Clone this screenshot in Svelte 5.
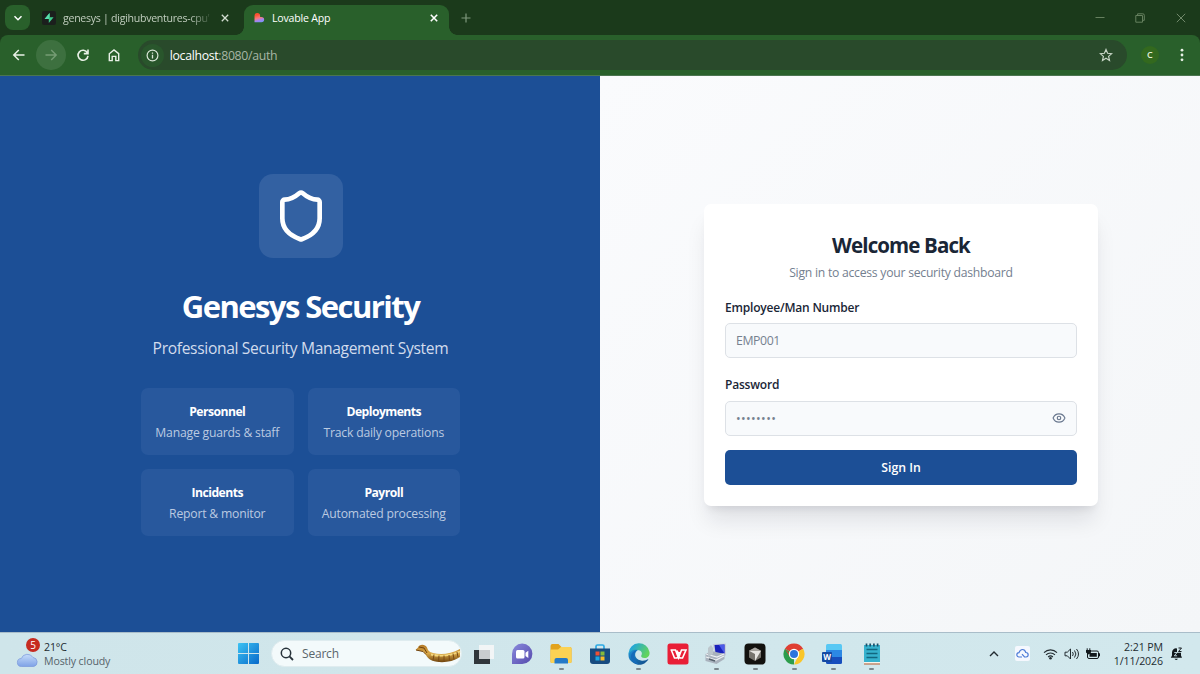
<script>
    const features = [
        { title: "Personnel", text: "Manage guards & staff" },
        { title: "Deployments", text: "Track daily operations" },
        { title: "Incidents", text: "Report & monitor" },
        { title: "Payroll", text: "Automated processing" }
    ];

    let employeeNumber = $state("");
    let password = $state("");
    let showPassword = $state(false);
</script>

<div class="screen">
    <header class="tabs">
        <button class="tab-menu" aria-label="Search tabs">
            <svg width="10" height="10" viewBox="0 0 10 10"><path d="M1.5 3.2 5 6.7l3.5-3.5" fill="none" stroke="#fff" stroke-width="1.5"/></svg>
        </button>
        <div class="tab">
            <svg class="favicon" width="14" height="14" viewBox="0 0 14 14">
                <rect width="14" height="14" rx="2" fill="#1b1f1d"/>
                <path d="M7.6 2v4.2h4L6.8 12V8H2.6z" fill="#3ecf8e"/>
                <path d="M7.6 2v4.2H7L6.8 8H2.6z" fill="#58dcae"/>
            </svg>
            <span class="tab-title faded">genesys | digihubventures-cpu'</span>
            <svg class="close" width="8" height="8" viewBox="0 0 8 8"><path d="m.8.8 6.4 6.4m0-6.4L.8 7.2" stroke="#d3ddd1" stroke-width="1.3"/></svg>
        </div>
        <div class="tab active">
            <svg class="favicon" width="12" height="12" viewBox="0 0 12 12">
                <defs>
                    <linearGradient id="heart" x1=".2" y1="0" x2=".5" y2="1">
                        <stop offset=".2" stop-color="#fa5030"/>
                        <stop offset=".55" stop-color="#f57a78"/>
                        <stop offset=".8" stop-color="#a784f0"/>
                        <stop offset="1" stop-color="#7f92f5"/>
                    </linearGradient>
                </defs>
                <path d="M1.5 3.8a2.8 2.8 0 0 1 5.6 0v1.1h1.4a2.6 2.6 0 0 1 0 5.3h-7z" fill="url(#heart)"/>
            </svg>
            <span class="tab-title">Lovable App</span>
            <svg class="close" width="8" height="8" viewBox="0 0 8 8"><path d="m.8.8 6.4 6.4m0-6.4L.8 7.2" stroke="#fff" stroke-width="1.6"/></svg>
        </div>
        <svg class="new-tab" width="10" height="10" viewBox="0 0 10 10"><path d="M5 .5v9M.5 5h9" stroke="#7f987d" stroke-width="1.2"/></svg>
        <div class="window-buttons">
            <svg width="10" height="10" viewBox="0 0 10 10"><path d="M.5 4.500h9" stroke="#66805f"/></svg>
            <svg width="10" height="10" viewBox="0 0 10 10"><path d="M.8 2.5h6.7v6.7H.8zM2.6 2.4V.8h5.2q1.5 0 1.5 1.5v5H7.7" fill="none" stroke="#66805f"/></svg>
            <svg width="10" height="10" viewBox="0 0 10 10"><path d="m.8.8 8.4 8.4m0-8.4L.8 9.2" stroke="#71896b"/></svg>
        </div>
    </header>

    <nav class="toolbar">
        <div class="nav-buttons">
            <span class="nav-button"><svg width="14" height="14" viewBox="0 0 14 14"><path d="M12.5 7H2m4.8-5L1.8 7l5 5" fill="none" stroke="#e9f1e7" stroke-width="1.5"/></svg></span>
            <span class="nav-button disabled"><svg width="14" height="14" viewBox="0 0 14 14"><path d="M1.5 7H12M7.2 2l5 5-5 5" fill="none" stroke="#759c74" stroke-width="1.4"/></svg></span>
            <span class="nav-button"><svg width="14" height="14" viewBox="0 0 14 14"><path d="M11.4 4.8A5 5 0 1 0 12 7.8M12 1.4v4.2H7.8" fill="none" stroke="#e9f1e7" stroke-width="1.6"/></svg></span>
            <span class="nav-button"><svg width="14" height="14" viewBox="0 0 14 14"><path d="M2.3 5.7 7 1.9l4.7 3.8v6.9H8.8V8.4H5.2v4.2H2.3z" fill="none" stroke="#e9f1e7" stroke-width="1.4"/></svg></span>
        </div>
        <div class="address">
            <span class="site-info">
                <svg width="13" height="13" viewBox="0 0 13 13"><circle cx="6.5" cy="6.5" r="5.4" fill="none" stroke="#dbe7d9" stroke-width="1.2"/><path d="M6.5 5.8v3.6M6.5 3.4v1.4" stroke="#dbe7d9" stroke-width="1.3"/></svg>
            </span>
            <span class="url"><b>localhost</b>:8080/auth</span>
            <svg class="star" width="14" height="14" viewBox="0 0 14 14"><path d="m7 1.5 1.6 3.8 4.1.4-3.1 2.7.9 4L7 10.3l-3.5 2.1.9-4-3.1-2.7 4.1-.4z" fill="none" stroke="#c5d3c4" stroke-width="1.2"/></svg>
        </div>
        <span class="avatar">C</span>
        <svg class="kebab" width="4" height="14" viewBox="0 0 4 14" fill="#e9f1e7"><circle cx="2" cy="2.2" r="1.4"/><circle cx="2" cy="7" r="1.4"/><circle cx="2" cy="11.8" r="1.4"/></svg>
    </nav>

    <main>
        <section class="brand">
            <div class="logo">
                <svg width="56" height="56" viewBox="0 0 24 24" fill="none" stroke="#fff" stroke-width="2" stroke-linecap="round" stroke-linejoin="round">
                    <path d="M20 13c0 5-3.5 7.5-7.66 8.95a1 1 0 0 1-.67-.01C7.5 20.5 4 18 4 13V6a1 1 0 0 1 1-1c2 0 4.5-1.2 6.24-2.72a1.17 1.17 0 0 1 1.52 0C14.51 3.81 17 5 19 5a1 1 0 0 1 1 1z"/>
                </svg>
            </div>
            <h1>Genesys Security</h1>
            <p class="tagline">Professional Security Management System</p>
            <div class="features">
                {#each features as feature}
                    <div class="feature">
                        <h3>{feature.title}</h3>
                        <p>{feature.text}</p>
                    </div>
                {/each}
            </div>
        </section>

        <section class="login">
            <form class="card">
                <h2>Welcome Back</h2>
                <p class="subtitle">Sign in to access your security dashboard</p>
                <label for="employee">Employee/Man Number</label>
                <div class="field">
                    <input id="employee" type="text" placeholder="EMP001" bind:value={employeeNumber} />
                </div>
                <label for="password">Password</label>
                <div class="field password">
                    <input id="password" type={showPassword ? "text" : "password"} placeholder="••••••••" bind:value={password} />
                    <button type="button" class="eye" aria-label="Show password" onclick={() => (showPassword = !showPassword)}>
                        <svg width="14" height="14" viewBox="0 0 24 24" fill="none" stroke="#6a788f" stroke-width="2" stroke-linecap="round" stroke-linejoin="round">
                            <path d="M2.06 12.35a1 1 0 0 1 0-.7 10.75 10.75 0 0 1 19.88 0 1 1 0 0 1 0 .7 10.75 10.75 0 0 1-19.88 0"/>
                            <circle cx="12" cy="12" r="3"/>
                        </svg>
                    </button>
                </div>
                <button type="button" class="submit">Sign In</button>
            </form>
        </section>
    </main>

    <footer class="taskbar">
        <div class="weather">
            <div class="cloud">
                <svg width="24" height="18" viewBox="0 0 24 18">
                    <defs>
                        <linearGradient id="cloud" x1="0" y1="0" x2="0" y2="1"><stop offset="0" stop-color="#c6dcfa"/><stop offset="1" stop-color="#7ea2e6"/></linearGradient>
                    </defs>
                    <path d="M5.5 15.5a4 4 0 0 1-.2-8A6.500 6.500 0 0 1 17 6.500a4.600 4.600 0 0 1 .8 9z" fill="url(#cloud)" stroke="#7897db" stroke-width=".7"/>
                </svg>
                <span class="count">5</span>
            </div>
            <div class="weather-text">
                <div>21°C</div>
                <div class="condition">Mostly cloudy</div>
            </div>
        </div>

        <svg class="start" width="21" height="21" viewBox="0 0 21 21">
            <defs>
                <linearGradient id="win" x1="0" y1="0" x2="1" y2="1"><stop offset="0" stop-color="#3cc3f3"/><stop offset="1" stop-color="#0869ca"/></linearGradient>
            </defs>
            <path d="M1 0h9v10H0V1a1 1 0 0 1 1-1zM11 0h9a1 1 0 0 1 1 1v9H11zM0 11h10v10H1a1 1 0 0 1-1-1zM11 11h10v9a1 1 0 0 1-1 1h-9z" fill="url(#win)"/>
        </svg>

        <div class="search">
            <svg width="14" height="14" viewBox="0 0 14 14"><circle cx="6" cy="6" r="4.7" fill="none" stroke="#27323a" stroke-width="1.5"/><path d="m9.4 9.4 3.6 3.6" stroke="#27323a" stroke-width="1.8"/></svg>
            <span>Search</span>
            <svg class="highlight" width="46" height="21" viewBox="0 0 46 21">
                <defs>
                    <linearGradient id="gold" x1="0" y1="0" x2="0" y2="1"><stop offset="0" stop-color="#b47a28"/><stop offset=".5" stop-color="#d9a847"/><stop offset="1" stop-color="#70450f"/></linearGradient>
                </defs>
                <path d="M.5 7 3 4.500C4 1 10 .5 12 4.500c1 3 2 4.500 6 5.500 8 2 18 1 27-4v8c-8 5.500-20 6.500-28 3.500-6-2.500-6-7-9-9z" fill="url(#gold)"/>
                <path d="M16 11.500c9 2 19 1.500 29-3" fill="none" stroke="#f4d77d" stroke-width="1.8"/>
                <path d="m19 11.500-1 6m6-5-.5 6m5.500-6v6m5-6.500.5 6M38 10.500l1 6m3-7.500 1 5" stroke="#7a4b16"/>
                <path d="m1 7 7 1.500 3 3M4 4l5 1 3 5" fill="none" stroke="#70430f"/>
            </svg>
        </div>

        <div class="apps">
            <div class="app">
                <svg width="24" height="24" viewBox="0 0 24 24">
                    <rect x="3" y="8" width="16" height="14" fill="#30363b"/>
                    <rect x="8" y="3" width="15" height="14" fill="#f2f5f6"/>
                    <path d="M8 8h11v9H8z" fill="#c9cccf"/>
                </svg>
            </div>
            <div class="app">
                <svg width="24" height="24" viewBox="0 0 24 24">
                    <defs><linearGradient id="chat" x1="0" y1="0" x2="1" y2="1"><stop offset="0" stop-color="#8a8add"/><stop offset="1" stop-color="#5549ac"/></linearGradient></defs>
                    <path d="M2 22V12a10.2 10.2 0 1 1 10.2 10z" fill="url(#chat)"/>
                    <rect x="6" y="8" width="8.5" height="8.5" rx="1.5" fill="#fff"/>
                    <path d="m15.5 10.8 2.8-2V16l-2.8-2z" fill="#fff"/>
                </svg>
            </div>
            <div class="app running">
                <svg width="24" height="24" viewBox="0 0 24 24">
                    <path d="M1.5 4q0-2 2-2h6l3 3H21q1.5 0 1.5 1.5V20q0 1-1.5 1H3q-1.5 0-1.5-1.5z" fill="#e2a31e"/>
                    <path d="M1.5 7.5H9L12 5h9q1.5 0 1.5 1.5V20q0 1-1.5 1H3q-1.5 0-1.5-1.500z" fill="#fbd254"/>
                    <path d="M5.500 21.500V18q0-2 2-2h9.500q2 0 2 2v3.500z" fill="#2479c7"/>
                </svg>
            </div>
            <div class="app">
                <svg width="24" height="24" viewBox="0 0 24 24">
                    <path d="M8 7V4.500Q8 3 9.500 3h5Q16 3 16 4.500V7" fill="none" stroke="#2daae4" stroke-width="1.7"/>
                    <path d="M2 6.500h20V19q0 3-3 3H5q-3 0-3-3z" fill="#174b80"/>
                    <path d="M7.500 9.500h4v4h-4z" fill="#ed5135"/><path d="M12.500 9.500h4v4h-4z" fill="#85b93b"/><path d="M7.500 14.500h4v4h-4z" fill="#1ca8e3"/><path d="M12.500 14.500h4v4h-4z" fill="#f7bb27"/>
                </svg>
            </div>
            <div class="app running">
                <svg width="24" height="24" viewBox="0 0 24 24">
                    <defs>
                        <linearGradient id="edge" x1="0" y1="0" x2="1" y2=".5"><stop offset=".2" stop-color="#22a5dc"/><stop offset="1" stop-color="#62d45c"/></linearGradient>
                        <linearGradient id="wave" x1="0" y1="0" x2="1" y2="1"><stop offset="0" stop-color="#2193d8"/><stop offset="1" stop-color="#104986"/></linearGradient>
                    </defs>
                    <path d="M1.5 11a10.6 10.6 0 0 1 21-1c.5 4-2 6-5 6s-4-1.500-3-3c1.300-2-.5-5-4-5-4 0-8 2-9 5z" fill="url(#edge)"/>
                    <path d="M1.5 13C2 9 7 7 11 8c-4 2-4.500 9 3 10.500 3 .6 5.500-.5 7.500-1.500C18 23.500 11 24 6.500 21 3 19 1.300 16 1.500 13z" fill="url(#wave)"/>
                    <path d="M10 8.300C6 11 6 18 12 22.300 7.500 22 4 18.500 4 14.500 4 11 7 8.600 10 8.300z" fill="#176bb9"/>
                </svg>
            </div>
            <div class="app">
                <svg width="24" height="24" viewBox="0 0 24 24">
                    <rect x="1.5" y="1.5" width="21" height="21" rx="2.5" fill="#e91e36"/>
                    <path d="M4.500 8h5l3 8 3-8h4.500l-3.500 8h-2.500L11 8.500M5.500 8.500l3 7.500H11l2.500-6" fill="none" stroke="#fff" stroke-width="1.6"/>
                </svg>
            </div>
            <div class="app running">
                <svg width="24" height="24" viewBox="0 0 24 24">
                    <path d="m9 2 13-.5v12L10 13z" fill="#c9cedb"/>
                    <path d="m10.500 3 10-.5v9l-9-.5z" fill="#1922bb"/>
                    <path d="m15 3 5.500-.5v9z" fill="#4c5ae8"/>
                    <path d="m1.500 12 6-3 13 3v5l-8 5-11-3z" fill="#a9b2bd"/>
                    <path d="m2 12 11 3 7-3M2 15l10 3 8-4" fill="none" stroke="#eef1f3" stroke-width="1.2"/>
                    <path d="m4 6 3-3 2 3v6l-5 3z" fill="#bcc6cc"/>
                    <path d="m5 17 6 2" stroke="#56616c" stroke-width="1.5"/>
                </svg>
            </div>
            <div class="app running">
                <svg width="24" height="24" viewBox="0 0 24 24">
                    <rect x="1.5" y="1.5" width="21" height="21" rx="4" fill="#13120f"/>
                    <path d="m12 5.500 6 3.300v6.700L12 19l-6-3.500V8.800z" fill="#77746e"/>
                    <path d="M6 8.800h12L12 19v-7z" fill="#e7e5e2"/>
                    <path d="m6 8.800 6-3.300 6 3.300z" fill="#aaa7a2"/>
                </svg>
            </div>
            <div class="app running">
                <svg width="24" height="24" viewBox="0 0 24 24">
                    <path d="M12 12 2.900 6.750a10.500 10.500 0 0 1 18.200 0z" fill="#df3e33"/>
                    <path d="M12 12v10.500A10.500 10.500 0 0 1 2.900 6.750z" fill="#2c9d4b"/>
                    <path d="m12 12 9.100-5.250A10.500 10.500 0 0 1 12 22.500l4-8z" fill="#fac629"/>
                    <path d="M12 7h9.200L12 6.500zM7.700 14.500 2.900 6.750 10 14z" fill="#df3e33"/>
                    <circle cx="12" cy="12" r="5.2" fill="#fff"/><circle cx="12" cy="12" r="4" fill="#2c73dc"/>
                </svg>
            </div>
            <div class="app running">
                <svg width="24" height="24" viewBox="0 0 24 24">
                    <path d="M5 8V3.500Q5 2 6.500 2h13Q21 2 21 3.500V8z" fill="#58c8f4"/>
                    <path d="M5 8h16v7H5z" fill="#2c88e4"/>
                    <path d="M5 15h16v5.500q0 1.500-1.500 1.500h-13Q5 22 5 20.500z" fill="#174ebd"/>
                    <rect x="1" y="10" width="10" height="10" rx="1" fill="#1549a2"/>
                    <text x="6" y="18" class="word">W</text>
                </svg>
            </div>
            <div class="app running">
                <svg width="24" height="24" viewBox="0 0 24 24">
                    <path d="M4 3h16v18H4z" fill="#36b2ce"/>
                    <path d="M4 20h16v2.500H4z" fill="#f5f6ee"/><path d="M4 22h16" stroke="#a5522d"/>
                    <path d="M6.500 7.500h11m-11 4h11m-11 4h11" stroke="#126780" stroke-width="1.5"/>
                    <path d="M6.500 1.500v3m3.700-3v3m3.700-3v3m3.700-3v3" stroke="#18506a" stroke-width="1.7"/>
                </svg>
            </div>
        </div>

        <div class="tray">
            <svg class="chevron" width="10" height="8" viewBox="0 0 10 8"><path d="m1 6 4-4 4 4" fill="none" stroke="#222b30" stroke-width="1.4"/></svg>
            <svg class="onedrive" width="15" height="15" viewBox="0 0 15 15">
                <rect width="15" height="15" rx="2" fill="#f5f8fe"/>
                <path d="M7 11H4a2.200 2.200 0 0 1 0-4.400Q5 3.500 7.500 3.500t3.300 3A2.200 2.200 0 0 1 11 11H9.500L7 8.200" fill="none" stroke="#4c7bd7" stroke-width="1.2"/>
            </svg>
            <svg width="15" height="12" viewBox="0 0 15 12"><path d="M1 4.600a9.200 9.200 0 0 1 13 0M3 6.900a6.400 6.400 0 0 1 9 0M5.100 9a3.500 3.500 0 0 1 4.800 0" fill="none" stroke="#222b30" stroke-width="1.1"/><circle cx="7.5" cy="10.3" r="1.3" fill="#222b30"/></svg>
            <svg class="speaker" width="15" height="12" viewBox="0 0 15 12"><path d="M1 4.200h2.300L6.500 1v10L3.300 7.800H1zM8.500 4q1.500 2 0 4M10.500 2.500q2.800 3.500 0 7M12.500 1q4 5 0 10" fill="none" stroke="#222b30"/></svg>
            <svg class="battery" width="16" height="12" viewBox="0 0 16 12">
                <rect x="2.500" y="3" width="11" height="7.500" rx="1.5" fill="none" stroke="#12191d"/>
                <path d="M4.500 5h7.300v3.800H4.500zM1 2h5v2.500L3.500 6.500 1 4.500z" fill="#12191d"/>
                <path d="M2.200.3v3M4.800.3v3m9.700 2v3" stroke="#12191d"/>
            </svg>
            <div class="clock">
                <div>2:21 PM</div>
                <div>1/11/2026</div>
            </div>
            <svg class="bell" width="13" height="14" viewBox="0 0 13 14">
                <path d="M.8 10.800 2 8.500v-3a4 4 0 0 1 5-4v4.300h4v2.700l1 2.300z" fill="#12191d"/>
                <path d="M4.500 11.700q1.700 2.500 3.400 0z" fill="#12191d"/>
                <path d="M8.500 1h3l-3 3.500h3" fill="none" stroke="#12191d"/>
                <path d="M4.300 5.500h2.800L4.300 8.800h2.800" fill="none" stroke="#cfe7ec" stroke-width=".9"/>
            </svg>
        </div>
    </footer>
</div>

<style>
    :global(body) {
        margin: 0;
        overflow: hidden;
    }

    .screen {
        width: 1200px;
        height: 674px;
        display: flex;
        flex-direction: column;
        font-family: "Open Sans", "Noto Sans", sans-serif;
        font-size: 12px;
        background: #1b3a1b;
    }

    .screen * {
        box-sizing: border-box;
    }

    svg {
        display: block;
        flex: none;
    }

    h1, h2, h3, p {
        margin: 0;
    }

    button {
        border: 0;
        padding: 0;
        font-family: inherit;
    }

    .tabs {
        height: 35px;
        flex: none;
        display: flex;
        background: #1b3a1b;
    }

    .tab-menu {
        width: 25px;
        height: 25px;
        margin: 5px 8px 0 5px;
        border-radius: 8px;
        background: #29602b;
        display: flex;
        align-items: center;
        justify-content: center;
    }

    .tab {
        width: 206px;
        height: 30px;
        margin-top: 5px;
        padding: 0 15px 5px 4px;
        display: flex;
        align-items: center;
        color: #c0cdbe;
        font-size: 10.6px;
    }

    .tab .favicon {
        margin-right: 7px;
    }

    .tab-title {
        white-space: nowrap;
        letter-spacing: -0.2px;
    }

    .tab-title.faded {
        letter-spacing: -0.28px;
        mask-image: linear-gradient(to right, #000 86%, rgba(0, 0, 0, 0.15));
    }

    .tab .close {
        margin-left: auto;
    }

    .tab.active {
        width: 205px;
        position: relative;
        padding-left: 9px;
        padding-right: 11px;
        background: #29602b;
        border-radius: 9px 9px 0 0;
        color: #fff;
    }

    .tab.active::before,
    .tab.active::after {
        content: "";
        position: absolute;
        bottom: 0;
        width: 8px;
        height: 8px;
    }

    .tab.active::before {
        left: -8px;
        background: radial-gradient(circle at 0 0, transparent 7.5px, #29602b 8px);
    }

    .tab.active::after {
        right: -8px;
        background: radial-gradient(circle at 100% 0, transparent 7.5px, #29602b 8px);
    }

    .new-tab {
        margin: 13px 0 0 12px;
    }

    .window-buttons {
        display: flex;
        gap: 30.5px;
        margin: 13px 14.5px 0 auto;
    }

    .toolbar {
        height: 41px;
        flex: none;
        display: flex;
        align-items: center;
        padding-right: 16.5px;
        background: #29602b;
        border-radius: 8px 8px 0 0;
        border-bottom: 1px solid #4b7550;
    }

    .nav-buttons {
        display: flex;
        gap: 2px;
        padding-left: 4.5px;
    }

    .nav-button {
        width: 29.7px;
        height: 30px;
        border-radius: 50%;
        display: flex;
        align-items: center;
        justify-content: center;
    }

    .nav-button.disabled {
        background: #3d703f;
    }

    .address {
        width: 989px;
        height: 30px;
        margin-left: 8.5px;
        padding: 0 14px 0 3px;
        display: flex;
        align-items: center;
        border-radius: 15px;
        background: #294a2b;
    }

    .site-info {
        width: 23px;
        height: 23px;
        border-radius: 50%;
        background: #29562c;
        display: flex;
        align-items: center;
        justify-content: center;
    }

    .url {
        margin-left: 6px;
        color: #a7b6a6;
        font-size: 12.3px;
        letter-spacing: -0.33px;
    }

    .url b {
        font-weight: 400;
        color: #fff;
    }

    .star {
        margin-left: auto;
    }

    .avatar {
        width: 18px;
        height: 18px;
        margin-left: 14px;
        border-radius: 50%;
        background: #33691e;
        color: #e3efd9;
        font-size: 9px;
        font-weight: 600;
        line-height: 18px;
        text-align: center;
    }

    .kebab {
        margin-left: auto;
    }

    main {
        height: 556px;
        flex: none;
        display: flex;
    }

    .brand {
        width: 600px;
        padding: 98px 0 0 1px;
        background: #1c4f96;
        color: #fff;
        display: flex;
        flex-direction: column;
        align-items: center;
    }

    .logo {
        width: 84px;
        height: 84px;
        border-radius: 14px;
        background: #3361a2;
        display: flex;
        align-items: center;
        justify-content: center;
    }

    h1 {
        margin-top: 28px;
        font-size: 31px;
        line-height: 40px;
        letter-spacing: -1.55px;
    }

    .tagline {
        margin-top: 10px;
        font-size: 15.6px;
        line-height: 24px;
        letter-spacing: -0.33px;
        color: #d2dced;
    }

    .features {
        width: 319px;
        margin-top: 28px;
        display: grid;
        grid-template-columns: 1fr 1fr;
        gap: 14px;
    }

    .feature {
        height: 67px;
        padding-top: 14.5px;
        border-radius: 7px;
        background: #28589d;
        text-align: center;
        line-height: 18px;
    }

    .feature h3 {
        font-size: 12.2px;
        font-weight: 700;
        letter-spacing: -0.55px;
    }

    .feature p {
        margin-top: 3px;
        font-size: 12.2px;
        letter-spacing: -0.2px;
        color: #bbcae1;
        white-space: nowrap;
    }

    .login {
        flex: 1;
        padding: 128px 0 0 104px;
        background: linear-gradient(135deg, #fafbfd, #f4f6f8);
    }

    .card {
        width: 394px;
        height: 302px;
        padding: 27px 21px 21px;
        border-radius: 7px;
        background: #fff;
        box-shadow: 0 18px 22px -4px rgba(15, 23, 42, 0.1), 0 7px 9px -5px rgba(15, 23, 42, 0.1);
        display: flex;
        flex-direction: column;
        color: #1a2636;
    }

    h2 {
        text-align: center;
        font-size: 20.5px;
        line-height: 28px;
        letter-spacing: -0.88px;
    }

    .subtitle {
        margin-top: 5px;
        text-align: center;
        font-size: 12.2px;
        line-height: 18px;
        letter-spacing: -0.25px;
        color: #74808f;
    }

    label {
        font-size: 12px;
        font-weight: 600;
        line-height: 16px;
        letter-spacing: -0.2px;
        margin-top: 17.5px;
        margin-bottom: 7.5px;
    }

    .field {
        height: 36px;
        flex: none;
        position: relative;
    }

    .field.password {
        margin-top: 0.5px;
    }

    input {
        width: 100%;
        height: 35px;
        padding: 0 10px;
        border: 1px solid #dde1e6;
        border-radius: 5px;
        background: #f8fafc;
        font-family: inherit;
        font-size: 12.3px;
        letter-spacing: -0.4px;
        color: #1a2636;
    }

    .password input {
        letter-spacing: 0.4px;
    }

    input::placeholder {
        color: #76818f;
    }

    .eye {
        position: absolute;
        top: 10.5px;
        right: 11px;
        background: none;
    }

    .submit {
        height: 35px;
        flex: none;
        margin-top: 13px;
        border-radius: 5px;
        background: #1c4f96;
        color: #fff;
        font-size: 12.3px;
        font-weight: 600;
    }

    .taskbar {
        height: 42px;
        flex: none;
        display: flex;
        align-items: center;
        background: linear-gradient(to right, #cfe5ea, #d2e8ed);
        border-top: 1px solid #a9bdc9;
        color: #222b30;
        font-size: 10.6px;
    }

    .weather {
        width: 238px;
        flex: none;
        display: flex;
        align-items: center;
    }

    .cloud {
        position: relative;
        width: 24px;
        height: 30px;
        margin-left: 16px;
        display: flex;
        align-items: flex-end;
    }

    .count {
        position: absolute;
        left: 10px;
        top: -1px;
        width: 14px;
        height: 14px;
        border-radius: 50%;
        background: #c62b20;
        color: #fff;
        font-size: 10px;
        line-height: 14px;
        text-align: center;
    }

    .weather-text {
        margin-left: 4px;
        line-height: 14px;
        letter-spacing: -0.12px;
    }

    .condition {
        color: #56636a;
    }

    .search {
        width: 191px;
        height: 27px;
        margin-left: 12px;
        padding-left: 8px;
        display: flex;
        flex: none;
        align-items: center;
        border-radius: 14px;
        background: #f3fafb;
        border: 1px solid #dfecef;
        color: #5a656b;
        font-size: 12px;
        letter-spacing: -0.2px;
    }

    .search span {
        margin-left: 8px;
    }

    .highlight {
        margin-left: auto;
    }

    .apps {
        display: flex;
        margin-left: 2px;
    }

    .app {
        position: relative;
        width: 38.85px;
        height: 41px;
        display: flex;
        align-items: center;
        justify-content: center;
    }

    .running::after {
        content: "";
        position: absolute;
        bottom: 4px;
        width: 5px;
        height: 2px;
        border-radius: 1px;
        background: #7b878d;
    }

    .word {
        font-size: 8px;
        font-weight: 700;
        fill: #fff;
        text-anchor: middle;
    }

    .tray {
        display: flex;
        align-items: center;
        margin-left: auto;
        padding-right: 17px;
    }

    .onedrive {
        margin: 0 13.5px 0 16px;
    }

    .speaker {
        margin: 0 6px;
    }

    .clock {
        width: 62px;
        text-align: right;
        line-height: 14px;
        letter-spacing: -0.1px;
        margin-right: 7px;
    }
</style>
